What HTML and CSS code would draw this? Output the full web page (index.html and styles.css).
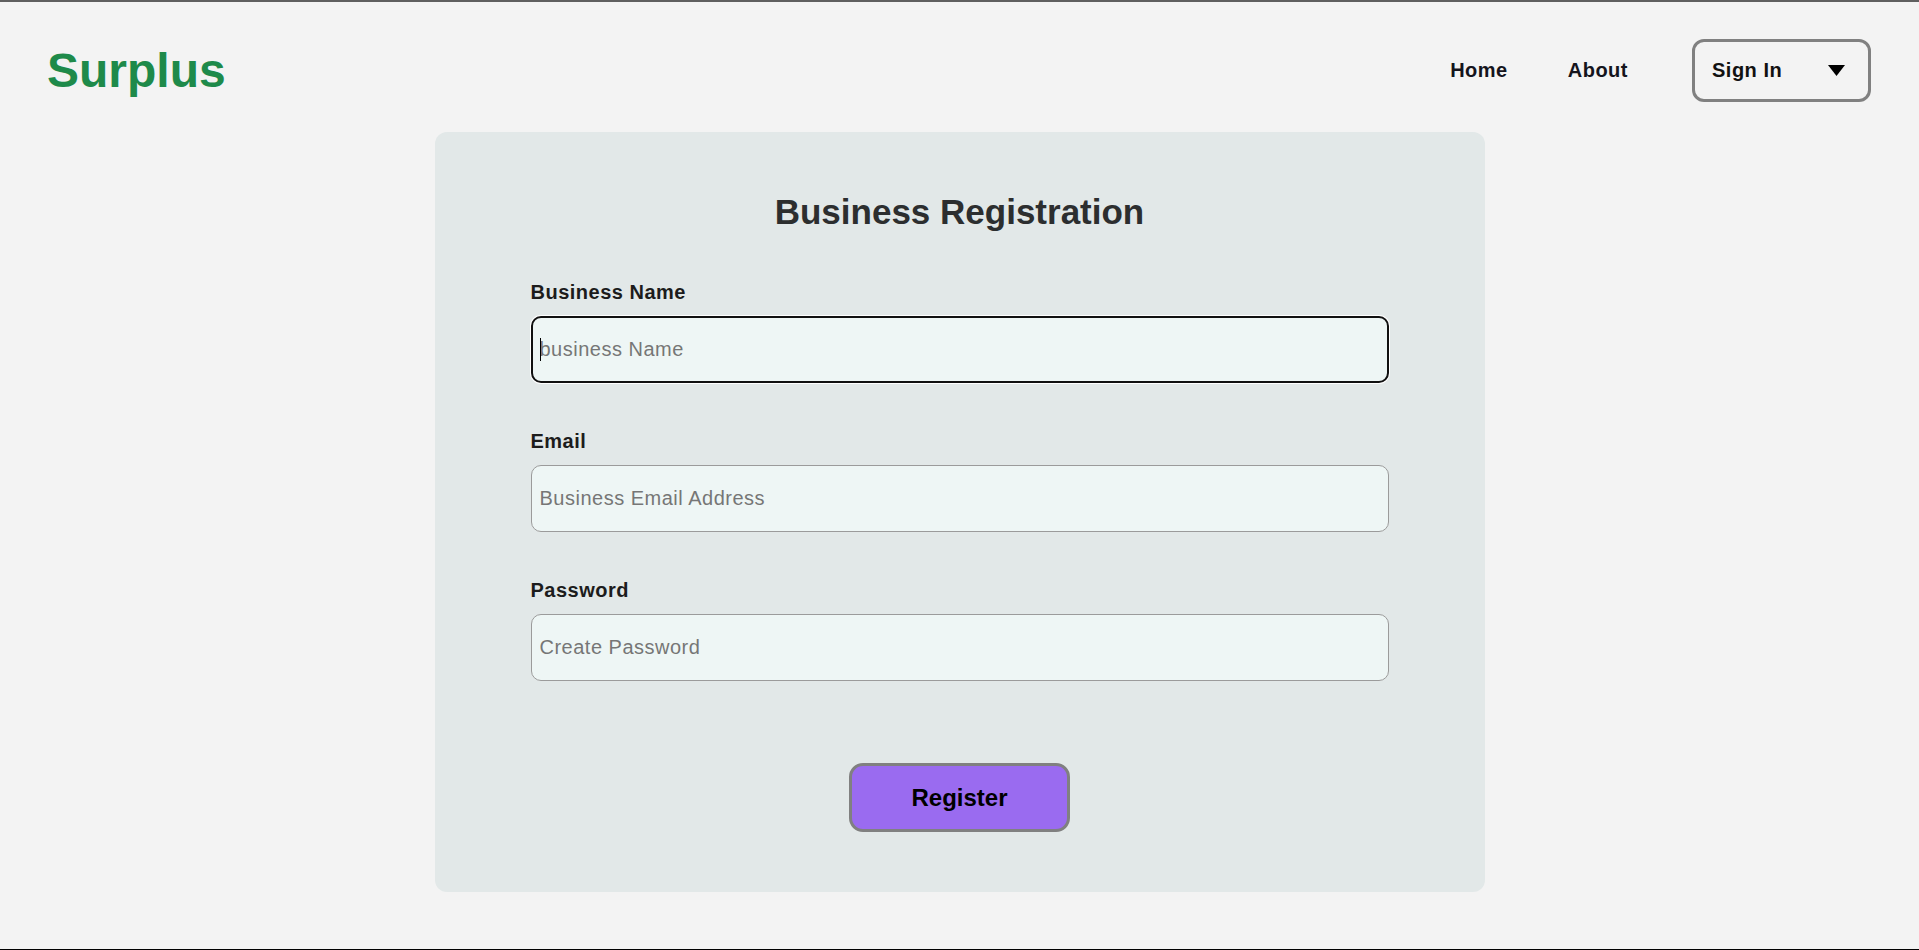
FILE: index.html
```html
<!DOCTYPE html>
<html lang="en">
<head>
<meta charset="utf-8">
<title>Surplus - Business Registration</title>
<link rel="stylesheet" href="styles.css">
</head>
<body>
<div class="page">
  <header class="header">
    <div class="logo">Surplus</div>
    <nav class="nav">
      <a class="nav-link" href="#">Home</a>
      <a class="nav-link" href="#">About</a>
      <button class="signin" type="button">
        <span>Sign In</span>
        <svg class="caret-down" width="17" height="11" viewBox="0 0 17 11" aria-hidden="true"><path d="M0 0H17L8.5 11Z" fill="#000"/></svg>
      </button>
    </nav>
  </header>

  <main class="card">
    <h1 class="title">Business Registration</h1>
    <form class="form">
      <div class="field">
        <label class="label" for="bname">Business Name</label>
        <div class="input-wrap">
          <input class="input is-focused" id="bname" type="text" placeholder="business Name">
          <span class="text-caret"></span>
        </div>
      </div>
      <div class="field">
        <label class="label" for="email">Email</label>
        <div class="input-wrap">
          <input class="input" id="email" type="email" placeholder="Business Email Address">
        </div>
      </div>
      <div class="field">
        <label class="label" for="pw">Password</label>
        <div class="input-wrap">
          <input class="input" id="pw" type="password" placeholder="Create Password">
        </div>
      </div>
      <div class="actions">
        <button class="register" type="button">Register</button>
      </div>
    </form>
  </main>
</div>
</body>
</html>
```

FILE: styles.css
```css
* { box-sizing: border-box; }

html, body {
  margin: 0;
  padding: 0;
}

body {
  background: #f3f3f3;
  font-family: "Liberation Sans", Arial, sans-serif;
  color: #151515;
}

.page {
  min-height: 100vh;
  border-top: 2px solid #5f5f5f;
  border-bottom: 1px solid #000;
  display: flex;
  flex-direction: column;
}

.header {
  display: flex;
  align-items: center;
  justify-content: space-between;
  padding: 37px 48px 0 47px;
}

.logo {
  font-size: 48px;
  font-weight: 700;
  color: #1e8a4a;
  line-height: normal;
}

.nav {
  display: flex;
  align-items: center;
  gap: 60px;
}

.nav-link {
  font-size: 20px;
  font-weight: 700;
  letter-spacing: 0.5px;
  color: #14141c;
  text-decoration: none;
}

.signin {
  margin-left: 4px;
  width: 179px;
  height: 63px;
  border: 3px solid #808080;
  border-radius: 12px;
  background: transparent;
  display: flex;
  align-items: center;
  justify-content: space-between;
  padding: 0 23px 0 17px;
  font-family: inherit;
  font-size: 20px;
  font-weight: 700;
  letter-spacing: 0.5px;
  color: #111;
  cursor: pointer;
}

.caret-down { display: block; }

.card {
  width: 1050px;
  margin: 30px auto 0;
  background: #e2e8e8;
  border-radius: 12px;
  padding: 60px 96px;
}

.title {
  margin: 0;
  text-align: center;
  font-size: 35px;
  font-weight: 700;
  line-height: normal;
  color: #2c2e2f;
}

.form {
  margin-top: 49px;
  display: flex;
  flex-direction: column;
}

.field + .field { margin-top: 47px; }

.label {
  display: block;
  font-size: 20px;
  font-weight: 700;
  letter-spacing: 0.5px;
  color: #1c1c1c;
  line-height: 23px;
  margin-bottom: 12px;
}

.input-wrap { position: relative; }

.input {
  display: block;
  width: 100%;
  height: 67px;
  border: 1px solid #9b9b9b;
  border-radius: 10px;
  background: #eef6f5;
  padding: 0 9px 0 8px;
  font-family: "Liberation Sans", Arial, sans-serif;
  font-size: 20px;
  letter-spacing: 0.5px;
  color: #222;
  outline: none;
}

.input::placeholder { color: #767676; }

.input.is-focused {
  border: 2px solid #111;
  padding-left: 7px;
  box-shadow: 0 0 0 1px #fff;
}

.text-caret {
  position: absolute;
  left: 9px;
  top: 22px;
  width: 1px;
  height: 23px;
  background: #000;
}

.actions {
  margin-top: 82px;
  display: flex;
  justify-content: center;
}

.register {
  width: 221px;
  height: 69px;
  border: 3px solid #808080;
  border-radius: 14px;
  background: #9a6bf0;
  font-family: inherit;
  font-size: 24px;
  font-weight: 700;
  color: #000;
  cursor: pointer;
}
```
